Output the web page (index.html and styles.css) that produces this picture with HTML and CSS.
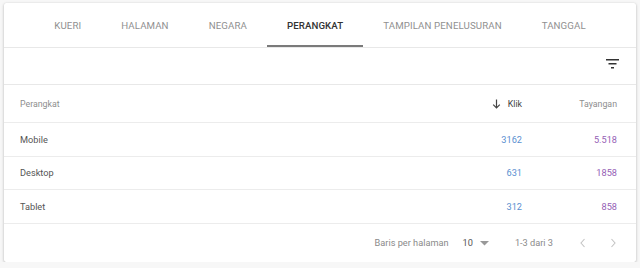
FILE: index.html
```html
<!DOCTYPE html>
<html>
<head>
<meta charset="utf-8">
<link rel="stylesheet" href="styles.css">
</head>
<body>
<div class="card">
  <div class="tabs">
    <div class="tab">KUERI</div>
    <div class="tab">HALAMAN</div>
    <div class="tab">NEGARA</div>
    <div class="tab active">PERANGKAT</div>
    <div class="tab">TAMPILAN PENELUSURAN</div>
    <div class="tab">TANGGAL</div>
  </div>
  <div class="toolbar">
    <svg class="filter" width="13" height="10" viewBox="0 0 13 10"><rect x="0" y="0" width="13" height="1.5" fill="#333"/><rect x="2.5" y="4" width="8" height="1.5" fill="#333"/><rect x="5" y="8" width="3" height="1.5" fill="#333"/></svg>
  </div>
  <div class="row head">
    <div class="c-name">Perangkat</div>
    <div class="c-klik sorted"><svg width="9" height="10" viewBox="0 0 9 10"><path d="M4.5 0.5V9M1.2 5.6l3.3 3.3 3.3-3.3" stroke="#444" stroke-width="1.2" fill="none"/></svg>Klik</div>
    <div class="c-tay">Tayangan</div>
  </div>
  <div class="row">
    <div class="c-name">Mobile</div>
    <div class="c-klik blue">3162</div>
    <div class="c-tay purple">5.518</div>
  </div>
  <div class="row">
    <div class="c-name">Desktop</div>
    <div class="c-klik blue">631</div>
    <div class="c-tay purple">1858</div>
  </div>
  <div class="row">
    <div class="c-name">Tablet</div>
    <div class="c-klik blue">312</div>
    <div class="c-tay purple">858</div>
  </div>
  <div class="footer">
    <span class="lbl">Baris per halaman</span>
    <span class="num">10</span>
    <svg class="dd" width="9" height="5" viewBox="0 0 9 5"><path d="M0 0h9L4.5 4.5z" fill="#999"/></svg>
    <span class="range">1-3 dari 3</span>
    <svg class="nav" width="8" height="12" viewBox="0 0 8 12"><path d="M5.5 2L2 6l3.5 4" stroke="#c4c4c4" stroke-width="1.1" fill="none"/></svg>
    <svg class="nav next" width="8" height="12" viewBox="0 0 8 12"><path d="M2.5 2L6 6l-3.5 4" stroke="#c4c4c4" stroke-width="1.1" fill="none"/></svg>
  </div>
</div>
</body>
</html>
```
FILE: styles.css
```css
* { box-sizing: border-box; }
html, body { margin: 0; padding: 0; background: #f7f7f7; }
body { padding: 3px 4px 0 4px; font-family: Roboto, "Liberation Sans", sans-serif; }
.card {
  width: 632px;
  height: 259px;
  background: #fff;
  box-shadow: 0 1px 3px rgba(0,0,0,0.25), 0 0 1px rgba(0,0,0,0.12);
  border-radius: 2px;
  display: flex;
  flex-direction: column;
}
.tabs {
  height: 45px;
  display: flex;
  justify-content: center;
  border-bottom: 1px solid #e8e8e8;
}
.tab {
  padding: 2px 20px 0 20px;
  font-size: 9.7px;
  color: #909090;
  display: flex;
  align-items: center;
  letter-spacing: 0.1px;
  border-bottom: 2px solid transparent;
}
.tab.active {
  color: #333;
  font-weight: 500;
  border-bottom-color: #7a7a7a;
}
.toolbar {
  height: 37px;
  display: flex;
  align-items: center;
  justify-content: flex-end;
  padding-right: 17px;
  border-bottom: 1px solid #e8e8e8;
}
.filter { margin-top: -4px; }
.row {
  height: 33.5px;
  display: flex;
  align-items: center;
  border-bottom: 1px solid #ececec;
  font-size: 9.2px;
  color: #555;
  padding: 0 19px 0 16px;
}
.row.head { height: 38px; color: #8e8e8e; font-size: 8.8px; }
.c-name { flex: 1; }
.c-klik { width: 60px; text-align: right; display: flex; justify-content: flex-end; align-items: center; }
.c-tay { width: 95px; text-align: right; }
.sorted { color: #444; gap: 7px; }
.blue { color: #5a8fd0; }
.purple { color: #9560b5; }
.footer {
  flex: 1;
  display: flex;
  align-items: center;
  justify-content: flex-end;
  font-size: 9.2px;
  color: #8a8a8a;
  padding-right: 19px;
}
.lbl { margin-right: 14px; }
.num { color: #555; margin-right: 7px; }
.dd { margin-right: 26px; margin-top: 2px; }
.range { margin-right: 26px; }
.nav.next { margin-left: 22px; }
```
